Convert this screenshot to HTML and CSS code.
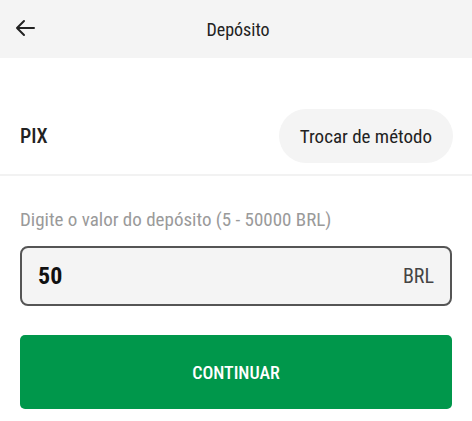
FILE: index.html
```html
<!DOCTYPE html>
<html lang="pt">
<head>
  <meta charset="UTF-8" />
  <title>Depósito</title>
  <link rel="stylesheet" href="styles.css">
</head>
<body>
  <header class="topbar">
    <button class="back" title="Voltar">
      <svg width="20" height="20" viewBox="0 0 20 20" fill="none" stroke="#222" stroke-width="2" stroke-linecap="round" stroke-linejoin="round">
        <path d="M19 10H2M9 3L2 10l7 7"/>
      </svg>
    </button>
    <h1>Depósito</h1>
  </header>

  <section class="method">
    <span class="method-name">PIX</span>
    <button class="switch">Trocar de método</button>
  </section>

  <main class="deposit">
    <label for="amount">Digite o valor do depósito (5 - 50000 BRL)</label>
    <div class="amount-box">
      <input id="amount" type="text" value="50" />
      <span class="currency">BRL</span>
    </div>
    <button class="continue">CONTINUAR</button>
  </main>
</body>
</html>
```

FILE: styles.css
```css
body {
  margin: 0;
  font-family: "Roboto Condensed", Roboto, sans-serif;
  font-stretch: condensed;
  color: #222;
  background: #fff;
}
.topbar {
  height: 58px;
  background: #f4f4f4;
  display: flex;
  align-items: center;
  justify-content: center;
  position: relative;
}
.topbar h1 {
  margin: 0 0 0 4px;
  font-size: 18px;
  font-weight: 400;
}
.back {
  position: absolute;
  left: 15px;
  top: 18px;
  padding: 0;
  border: none;
  background: none;
  width: 20px;
  height: 20px;
}
.method {
  display: flex;
  justify-content: space-between;
  align-items: center;
  padding: 51px 19px 11px 20px;
  border-bottom: 2px solid #f2f2f2;
}
.method-name {
  font-size: 20px;
  font-weight: 500;
}
.switch {
  height: 54px;
  padding: 0 21px;
  border: none;
  border-radius: 27px;
  background: #f4f4f4;
  font-family: inherit;
  font-stretch: condensed;
  font-size: 19px;
  color: #222;
}
.deposit {
  display: flex;
  flex-direction: column;
  padding: 32px 20px 0;
}
.deposit label {
  font-size: 19px;
  color: #9a9a9a;
  margin-bottom: 15px;
}
.amount-box {
  display: flex;
  align-items: center;
  height: 56px;
  border: 2px solid #555;
  border-radius: 8px;
  background: #f4f4f4;
  padding: 0 16px 0 16px;
}
.amount-box input {
  flex: 1;
  min-width: 0;
  border: none;
  background: none;
  outline: none;
  padding: 0;
  font-family: inherit;
  font-stretch: condensed;
  font-size: 24px;
  font-weight: 700;
  color: #111;
}
.currency {
  font-size: 20px;
  color: #444;
}
.continue {
  margin-top: 29px;
  height: 74px;
  border: none;
  border-radius: 5px;
  background: #00974b;
  color: #fff;
  font-family: inherit;
  font-stretch: condensed;
  font-size: 18px;
  font-weight: 500;
}
```
